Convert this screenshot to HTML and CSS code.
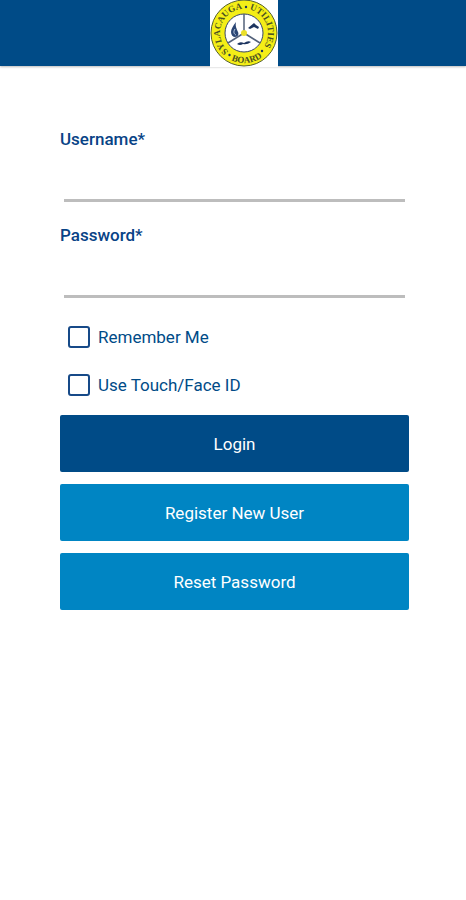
FILE: index.html
```html
<!DOCTYPE html>
<html lang="en">
<head>
  <meta charset="utf-8">
  <meta name="viewport" content="width=device-width, initial-scale=1">
  <title>Sylacauga Utilities Board</title>
  <link rel="stylesheet" href="styles.css">
</head>
<body>
  <header class="header">
    <svg class="logo" viewBox="0 0 68 67" role="img" aria-label="Sylacauga Utilities Board">
      <defs>
        <path id="arc-left" d="M19.2 51.9A24 24 0 0 1 33.2 9"/>
        <path id="arc-right" d="M33.2 9A24 24 0 0 1 50 50.9"/>
        <path id="arc-bottom" d="M13.2 54.6A30 30 0 0 0 58.9 49.8"/>
      </defs>
      <circle class="seal" cx="34" cy="33" r="33"/>
      <circle class="face" cx="34" cy="33" r="19"/>
      <text class="seal-text"><textPath href="#arc-left" startOffset="50%">SYLACAUGA</textPath></text>
      <text class="seal-text"><textPath href="#arc-right" startOffset="50%">UTILITIES</textPath></text>
      <text class="seal-text"><textPath href="#arc-bottom" startOffset="50%">BOARD</textPath></text>
      <g class="ink">
        <circle cx="36" cy="7" r="1.2"/>
        <circle cx="19.5" cy="55" r="1.2"/>
        <circle cx="52" cy="51" r="1.2"/>
      </g>
      <path class="spokes" d="M34 14V33L18 43M34 33L50 43"/>
      <path class="drop" d="M26 22C23 26 21 29 21 32C21 35 23 37 25 37C28 37 29 34 28 32C27 29 25 27 26 22Z"/>
      <path class="drop-light" d="M25 29C23 32 24 34 26 35"/>
      <path class="ink" d="M38 28L44 23L46 25L49 27L48 29L44 27L40 29Z"/>
      <path class="ink" d="M27 44Q30 41 34 43Q38 40 41 42Q37 45 33 44Q30 46 27 44Z"/>
      <circle class="hub" cx="34" cy="33" r="3"/>
    </svg>
  </header>

  <main class="login">
    <form class="form">
      <div class="field">
        <label class="field-label" for="username">Username*</label>
        <input class="field-input" id="username" type="text" autocomplete="username" required>
      </div>
      <div class="field">
        <label class="field-label" for="password">Password*</label>
        <input class="field-input" id="password" type="password" autocomplete="current-password" required>
      </div>
      <div class="options">
        <label class="option"><input class="checkbox" type="checkbox">Remember Me</label>
        <label class="option"><input class="checkbox" type="checkbox">Use Touch/Face ID</label>
      </div>
      <div class="actions">
        <button class="button button-primary" type="submit">Login</button>
        <button class="button" type="button">Register New User</button>
        <button class="button" type="button">Reset Password</button>
      </div>
    </form>
  </main>
</body>
</html>
```

FILE: styles.css
```css
* {
  box-sizing: border-box;
}

body {
  margin: 0;
  background: #fff;
  color: #004b87;
  font-family: Roboto, "Liberation Sans", sans-serif;
  font-size: 17px;
  line-height: 20px;
}

.header {
  display: flex;
  justify-content: center;
  height: 66px;
  padding-left: 22px;
  background: #004b87;
  box-shadow: 0 1px 2px #0004;
}

.logo {
  display: block;
  width: 68px;
  height: 67px;
  background: #fff;
}

.seal {
  fill: #f4ee17;
  stroke: #55602e;
  stroke-width: 1;
}

.face {
  fill: #fff;
  stroke: #39456a;
  stroke-width: 1;
}

.seal-text {
  fill: #4a5022;
  font-family: "Liberation Serif", serif;
  font-size: 9px;
  font-weight: 700;
  text-anchor: middle;
}

.ink {
  fill: #1d3560;
}

.spokes {
  fill: none;
  stroke: #53617a;
  stroke-width: 1.5;
}

.drop {
  fill: #2b4674;
}

.drop-light {
  fill: none;
  stroke: #b9cbe2;
  stroke-width: 1;
}

.hub {
  fill: #eadf2a;
}

.login {
  padding: 63px 57px 40px 60px;
}

.field {
  display: flex;
  flex-direction: column;
  margin-bottom: 23px;
}

.field-label {
  color: #084386;
  font-weight: 500;
}

.field-input {
  height: 53px;
  margin: 0 4px;
  padding: 16px 4px 8px;
  border: 0;
  border-bottom: 3px solid #bdbdbd;
  background: transparent;
  color: inherit;
  font: inherit;
}

.options {
  display: flex;
  flex-direction: column;
  gap: 24px;
  padding: 4px 8px;
}

.option {
  display: flex;
  align-items: center;
  gap: 8px;
  height: 24px;
}

.checkbox {
  appearance: none;
  width: 22px;
  height: 22px;
  margin: 0;
  border: 2px solid #174a88;
  border-radius: 3px;
  background: #fff;
}

.checkbox:checked {
  background: #004b87;
  box-shadow: inset 0 0 0 3px #fff;
}

.actions {
  display: flex;
  flex-direction: column;
  gap: 12px;
  margin-top: 14px;
}

.button {
  height: 57px;
  border: 0;
  border-radius: 2px;
  background: #0085c3;
  color: #fff;
  font: inherit;
}

.button-primary {
  background: #004b87;
}
```
